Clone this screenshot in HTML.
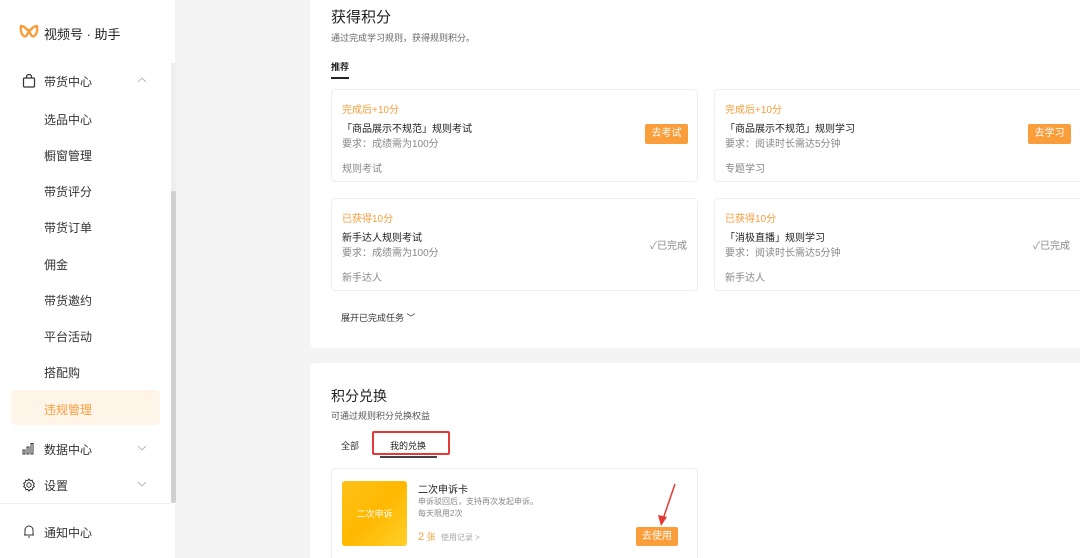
<!DOCTYPE html>
<html style="overflow:hidden;height:558px"><head><meta charset="utf-8"><style>
*{margin:0;padding:0;box-sizing:border-box}
body{width:1080px;height:558px;overflow:hidden;background:#f4f4f4;font-family:"Liberation Sans","Noto Sans CJK SC",sans-serif;position:relative;color:#333}
.a{position:absolute}
.side{left:0;top:0;width:175px;height:558px;background:#fff}
.nav{position:absolute;left:44px;font-size:12px;color:#333}
.or{color:#fa9d3b}
.card{position:absolute;border:1px solid #eee;border-radius:4px;background:#fff;width:367px}
.t1{font-size:10px;color:#fa9d3b;position:absolute;left:10px}
.t2{font-size:10px;color:#222;position:absolute;left:10px}
.t3{font-size:10px;color:#888;position:absolute;left:10px}
.btn{position:absolute;background:#fa9d3b;color:#fff;font-size:10px;border-radius:2px;text-align:center}
.done{position:absolute;right:10px;font-size:10px;color:#888}
</style></head><body>
<div class="a side"></div>
<svg class="a" style="left:19px;top:23px" width="20" height="18" viewBox="0 0 20 16"><path d="M2 2 C1 8 4 14 7 12 C9 10 10 7 10 6 C10 7 11 10 13 12 C16 14 19 8 18 2 C15 2 12 5 10 8 C8 5 5 2 2 2Z" fill="none" stroke="#fa9d3b" stroke-width="2.4" stroke-linejoin="round"/></svg>
<div class="a" style="left:44px;top:24px;font-size:13px;color:#222">视频号 · 助手</div>
<svg class="a" style="left:22px;top:74px" width="14" height="14" viewBox="0 0 14 14"><rect x="1.5" y="4" width="11" height="9" rx="1" fill="none" stroke="#333" stroke-width="1.2"/><path d="M4.5 4V2.5a2.5 2 0 0 1 5 0V4" fill="none" stroke="#333" stroke-width="1.2"/></svg>
<div class="nav" style="top:73px">带货中心</div>
<svg class="a" style="left:137px;top:77px" width="10" height="6"><path d="M1 5L5 1L9 5" fill="none" stroke="#bbb"/></svg>
<div class="nav" style="top:111px">选品中心</div>
<div class="nav" style="top:147px">橱窗管理</div>
<div class="nav" style="top:183px">带货评分</div>
<div class="nav" style="top:219px">带货订单</div>
<div class="nav" style="top:256px">佣金</div>
<div class="nav" style="top:292px">带货邀约</div>
<div class="nav" style="top:328px">平台活动</div>
<div class="nav" style="top:364px">搭配购</div>
<div class="a" style="left:11px;top:390px;width:149px;height:35px;background:#fff4e8;border-radius:5px"></div>
<div class="nav or" style="top:401px">违规管理</div>
<svg class="a" style="left:22px;top:442px" width="14" height="13"><rect x="1" y="8" width="2" height="4" fill="none" stroke="#333"/><rect x="5" y="5" width="2" height="7" fill="none" stroke="#333"/><rect x="9" y="1.5" width="2" height="10.5" fill="none" stroke="#333"/></svg>
<div class="nav" style="top:441px">数据中心</div>
<svg class="a" style="left:137px;top:445px" width="10" height="6"><path d="M1 1L5 5L9 1" fill="none" stroke="#bbb"/></svg>
<svg class="a" style="left:22px;top:478px" width="14" height="14" viewBox="0 0 14 14"><circle cx="7" cy="7" r="2.2" fill="none" stroke="#333"/><path d="M7 1l1.2 1.6 2-.4.4 2 1.7 1.1-.9 1.7.9 1.7-1.7 1.1-.4 2-2-.4L7 13l-1.2-1.6-2 .4-.4-2-1.7-1.1.9-1.7-.9-1.7 1.7-1.1.4-2 2 .4z" fill="none" stroke="#333"/></svg>
<div class="nav" style="top:477px">设置</div>
<svg class="a" style="left:137px;top:481px" width="10" height="6"><path d="M1 1L5 5L9 1" fill="none" stroke="#bbb"/></svg>
<div class="a" style="left:0;top:503px;width:171px;height:1px;background:#f0f0f0"></div>
<svg class="a" style="left:23px;top:524px" width="12" height="14"><path d="M2 11V6a4 4 0 0 1 8 0v5zM1 11h10M5 13h2" fill="none" stroke="#333"/></svg>
<div class="nav" style="top:524px">通知中心</div>
<div class="a" style="left:171px;top:63px;width:5px;height:440px;background:#eee"></div>
<div class="a" style="left:171px;top:191px;width:5px;height:312px;background:#d0d0d0;border-radius:2px"></div>

<div class="a" style="left:310px;top:0;width:770px;height:348px;background:#fff;border-radius:0 0 0 6px"></div>
<div class="a" style="left:331px;top:6px;font-size:15px;color:#222">获得积分</div>
<div class="a" style="left:331px;top:31px;font-size:9px;color:#666">通过完成学习规则，获得规则积分。</div>
<div class="a" style="left:331px;top:60px;font-size:9px;color:#222;font-weight:bold">推荐</div>
<div class="a" style="left:331px;top:77px;width:18px;height:2px;background:#222"></div>

<div class="card" style="left:331px;top:89px;height:93px"><div class="t1" style="top:11px">完成后+10分</div><div class="t2" style="top:30px">「商品展示不规范」规则考试</div><div class="t3" style="top:45px">要求：成绩需为100分</div><div class="t3" style="top:70px">规则考试</div><div class="btn" style="left:313px;top:34px;width:43px;height:20px;line-height:20px">去考试</div></div>
<div class="card" style="left:714px;top:89px;height:93px;width:380px"><div class="t1" style="top:11px">完成后+10分</div><div class="t2" style="top:30px">「商品展示不规范」规则学习</div><div class="t3" style="top:45px">要求：阅读时长需达5分钟</div><div class="t3" style="top:70px">专题学习</div><div class="btn" style="left:313px;top:34px;width:43px;height:20px;line-height:20px">去学习</div></div>
<div class="card" style="left:331px;top:198px;height:93px"><div class="t1" style="top:11px">已获得10分</div><div class="t2" style="top:30px">新手达人规则考试</div><div class="t3" style="top:45px">要求：成绩需为100分</div><div class="t3" style="top:70px">新手达人</div><div class="done" style="top:38px">✓已完成</div></div>
<div class="card" style="left:714px;top:198px;height:93px;width:380px"><div class="t1" style="top:11px">已获得10分</div><div class="t2" style="top:30px">「消极直播」规则学习</div><div class="t3" style="top:45px">要求：阅读时长需达5分钟</div><div class="t3" style="top:70px">新手达人</div><div class="done" style="top:38px;right:23px">✓已完成</div></div>
<div class="a" style="left:341px;top:311px;font-size:9px;color:#333">展开已完成任务 ﹀</div>

<div class="a" style="left:310px;top:363px;width:770px;height:195px;background:#fff;border-radius:6px 0 0 0"></div>
<div class="a" style="left:331px;top:386px;font-size:14px;color:#222">积分兑换</div>
<div class="a" style="left:331px;top:409px;font-size:9px;color:#555">可通过规则积分兑换权益</div>
<div class="a" style="left:341px;top:439px;font-size:9px;color:#333">全部</div>
<div class="a" style="left:372px;top:431px;width:78px;height:24px;border:2px solid #e53935;border-radius:2px"></div>
<div class="a" style="left:390px;top:439px;font-size:9px;color:#222">我的兑换</div>
<div class="a" style="left:380px;top:456px;width:57px;height:2px;background:#444"></div>
<div class="card" style="left:331px;top:468px;height:95px"><div class="a" style="left:10px;top:12px;width:65px;height:65px;border-radius:3px;background:linear-gradient(135deg,#ffc21a,#ffb800 50%,#ffcf2a)"></div><div class="a" style="left:10px;top:38px;width:65px;text-align:center;color:#fff;font-size:9px">二次申诉</div><div class="t2" style="left:86px;top:12px">二次申诉卡</div><div class="t3" style="left:86px;top:27px;font-size:8px">申诉驳回后，支持再次发起申诉。</div><div class="t3" style="left:86px;top:39px;font-size:8px">每天限用2次</div><div class="a" style="left:86px;top:61px;font-size:11px;color:#fa9d3b">2<span style="font-size:9px"> 张</span> <span style="font-size:8px;color:#aaa">&nbsp;使用记录 &gt;</span></div><div class="btn" style="left:304px;top:58px;width:42px;height:19px;line-height:19px">去使用</div></div>
<svg class="a" style="left:650px;top:482px" width="30" height="46"><path d="M25 2L12 40" stroke="#e53935" stroke-width="1.5"/><path d="M8 33L11 44L17 35Z" fill="#e53935"/></svg>
</body></html>
